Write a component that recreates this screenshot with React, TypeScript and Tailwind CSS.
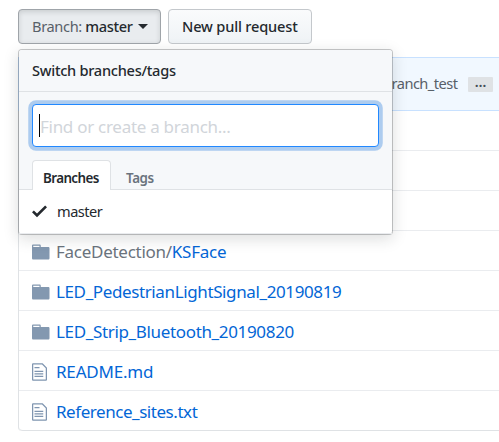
import type { ReactNode } from 'react';

function Folder() {
  return (
    <svg viewBox="0 0 14 16" className="h-5 w-[17.5px] fill-[#8398b0]">
      <path d="M13 4H7V3c0-.66-.31-1-1-1H1c-.55 0-1 .45-1 1v10c0 .55.45 1 1 1h12c.55 0 1-.45 1-1V5c0-.55-.45-1-1-1zM6 4H1V3h5v1z" />
    </svg>
  );
}

function FileIcon() {
  return (
    <svg viewBox="0 0 12 16" className="h-5 w-[15px] fill-[#7f95b0]">
      <path d="M6 5H2V4h4v1zM2 8h7V7H2v1zm0 2h7V9H2v1zm0 2h7v-1H2v1zm10-7.5V14c0 .55-.45 1-1 1H1c-.55 0-1-.45-1-1V2c0-.55.45-1 1-1h7.5L12 4.5zM11 5L8 2H1v12h10V5z" />
    </svg>
  );
}

function Row({ icon, children }: { icon?: ReactNode; children?: ReactNode }) {
  return (
    <div className="flex h-10 items-center border-b border-[#eaecef] pt-0.5 pl-[13px] text-[17px] text-[#0366d6] last:rounded-bl-[4px] last:border-[#dfe2e5]">
      <span className="w-[24px] shrink-0">{icon}</span>
      {children}
    </div>
  );
}

export default function App() {
  return (
    <div className="relative h-[442px] w-[499px] overflow-hidden bg-white font-['Noto_Sans','Open_Sans',sans-serif] whitespace-nowrap text-[#24292e]">
      <div className="flex gap-[7px] pt-[9px] pl-[18px] text-[14.6px] leading-[33px] font-medium">
        <button className="flex h-[35px] w-[143px] items-center rounded-[4px] border border-[#9fa4a9] bg-[#e9ecef] pl-[13px] shadow-[inset_0_2px_5px_rgba(27,31,35,0.15)]">
          <span className="tracking-[-0.35px]">
            <span className="font-normal text-[#586069]">Branch:</span> master
          </span>
          <span className="ml-[5px] border-x-[5px] border-t-[5px] border-x-transparent border-t-[#24292e]" />
        </button>
        <button className="flex h-[35px] w-[144px] items-center rounded-[4px] border border-[#c4c8cc] bg-linear-to-b from-[#fafbfc] to-[#eff3f6] pl-[13px]">
          <span className="tracking-[-0.17px]">New pull request</span>
        </button>
      </div>

      <div className="mt-[13px] ml-[18px] w-[520px] rounded-b-[4px] border-l border-[#dfe2e5]">
        <div className="-ml-px flex h-[54px] items-center border-y border-l border-[#c8e1ff] bg-[#f1f8ff] pl-[372.5px] text-[14.6px] text-[#586069]">
          <span className="w-[66.5px] tracking-[-0.52px]">ranch_test</span>
          <span className="ml-[10px] flex h-[15px] w-[25px] justify-center rounded-[1px] bg-[#dfe2e5] text-[14px] leading-[9px] font-semibold text-[#444d56]">…</span>
        </div>
        <Row />
        <Row />
        <Row />
        <Row icon={<Folder />}>
          <span className="tracking-[-0.27px]"><span className="text-[#6a737d]">FaceDetection/</span>KSFace</span>
        </Row>
        <Row icon={<Folder />}>
          <span className="tracking-[-0.38px]">LED_PedestrianLightSignal_20190819</span>
        </Row>
        <Row icon={<Folder />}>
          <span className="tracking-[-0.34px]">LED_Strip_Bluetooth_20190820</span>
        </Row>
        <Row icon={<FileIcon />}>
          <span className="tracking-[-0.2px]">README.md</span>
        </Row>
        <Row icon={<FileIcon />}>
          <span className="tracking-[-0.45px]">Reference_sites.txt</span>
        </Row>
      </div>

      <div className="absolute top-[49px] left-[18px] h-[186px] w-[375px] rounded-[4px] border border-[rgba(27,31,35,0.24)] bg-white bg-clip-padding shadow-[0_4px_15px_rgba(27,31,35,0.15)]">
        <div className="flex h-[42px] items-center rounded-t-[3px] border-b border-[#dfe2e5] bg-[#f6f8fa] pl-[13px] text-[14.6px] font-medium">
          <span className="tracking-[-0.28px]">Switch branches/tags</span>
        </div>
        <div className="h-[98px] border-b border-[#dfe2e5] bg-[#f6f8fa] px-[13px] pt-3">
          <div className="flex h-[43px] w-[347px] items-center rounded-[4px] border border-[#2188ff] bg-white pt-0.5 pl-[6px] text-[17px] text-[#d1d5da] shadow-[0_0_0_3.75px_rgba(3,102,214,0.3)]">
            <span className="-mt-0.5 h-[23px] w-px bg-black" />
            <span className="tracking-[-0.28px]">Find or create a branch...</span>
          </div>
          <div className="mt-[13px] flex text-[13.4px] leading-[20px] font-semibold">
            <div className="h-[30px] w-[79px] rounded-t-[4px] border border-b-0 border-[#dfe2e5] bg-white pt-[7px] pl-[10px] tracking-[-0.6px]">Branches</div>
            <div className="pt-2 pl-[15px] tracking-[-0.4px] text-[#6a737d]">Tags</div>
          </div>
        </div>
        <div className="flex h-11 items-center border-b border-[#eaecef] pl-[13px] text-[14.6px]">
          <svg viewBox="0 0 12 16" className="-mt-0.5 h-5 w-[15px] fill-[#24292e]">
            <path d="M12 5l-8 8-4-4 1.5-1.5L4 10l6.5-6.5L12 5z" />
          </svg>
          <span className="ml-[10px] tracking-[-0.5px]">master</span>
        </div>
      </div>
    </div>
  );
}
